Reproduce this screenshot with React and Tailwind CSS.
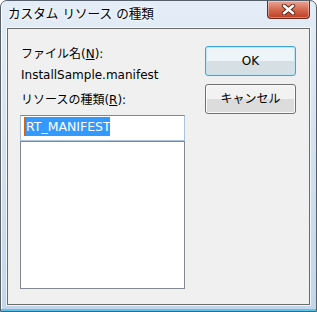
export default function App() {
  const font = { fontFamily: '"DejaVu Sans", "Noto Sans CJK JP", sans-serif' }

  return (
    <div
      className="flex h-[312px] w-[317px] flex-col overflow-hidden rounded-t-[7px] border border-[#55606c] bg-gradient-to-b from-[#e4edf7] via-[#d3e0ee] to-[#c3d6ea] text-[12px] text-black shadow-[inset_0_-2px_0_#55c6ef,inset_1px_0_0_#ffffff]"
      style={font}
    >
      {/* title bar */}
      <div className="flex h-[27px] shrink-0 items-start justify-between pl-[7px] pr-[6px]">
        <span className="mt-[5px] text-[12.6px] leading-[16px] [text-shadow:0_0_6px_#ffffff,0_0_3px_#ffffff]">
          カスタム リソース の種類
        </span>
        <div className="flex h-[18px] w-[43px] items-center justify-center rounded-b-[4px] border border-t-0 border-[#6e2a20] bg-gradient-to-b from-[#eba595] via-[#d46a50] to-[#bf3b20] shadow-[inset_0_0_0_1px_rgba(255,255,255,0.35)]">
          <svg width="15" height="11" viewBox="0 0 15 11">
            <path
              d="M3 1.8 L12 9.2 M12 1.8 L3 9.2"
              stroke="#5a2218"
              strokeWidth="4.4"
              strokeLinecap="round"
            />
            <path
              d="M3 1.8 L12 9.2 M12 1.8 L3 9.2"
              stroke="#ffffff"
              strokeWidth="2.6"
              strokeLinecap="round"
            />
          </svg>
        </div>
      </div>

      {/* client area */}
      <div className="mx-[6px] mb-[6px] flex flex-1 border border-[#6c6c6c] bg-[#f0f0f0] pl-[12px] pt-[17px] shadow-[0_0_0_1px_rgba(255,255,255,0.7)]">
        <div className="flex w-[165px] flex-col">
          <div className="h-[16px] pl-[1px] leading-[16px]">
            ファイル名(<span className="underline">N</span>):
          </div>
          <div className="mt-[5px] h-[16px] pl-[1px] leading-[16px]">InstallSample.manifest</div>
          <div className="mt-[9px] h-[16px] pl-[1px] leading-[16px]">
            リソースの種類(<span className="underline">R</span>):
          </div>
          <div className="mt-[7px] h-[26px] border border-[#abc1de] border-t-[#5d8fc0] bg-white pl-[3px] pt-[1px]">
            <div className="flex h-[19px] w-[86px] items-center bg-[#3399ff]">
              <div className="h-[19px] w-[2px] shrink-0 bg-[#cc6a14]" />
              <span className="text-[12.5px] leading-[19px] text-white">RT_MANIFEST</span>
            </div>
          </div>
          <div className="h-[148px] border border-[#828790] bg-white" />
        </div>

        <div className="ml-[20px] flex w-[91px] flex-col gap-[8px]">
          <button className="h-[30px] rounded-[3px] border border-[#3ba5dc] bg-gradient-to-b from-[#eef5f9] from-50% to-[#d6dfe4] to-50% shadow-[inset_0_0_0_1px_#bfe6f8]">
            OK
          </button>
          <button className="h-[30px] rounded-[3px] border border-[#707070] bg-gradient-to-b from-[#f2f2f2] from-50% to-[#dcdcdc] to-50% shadow-[inset_0_0_0_1px_#fbfbfb]">
            キャンセル
          </button>
        </div>
      </div>
    </div>
  )
}
